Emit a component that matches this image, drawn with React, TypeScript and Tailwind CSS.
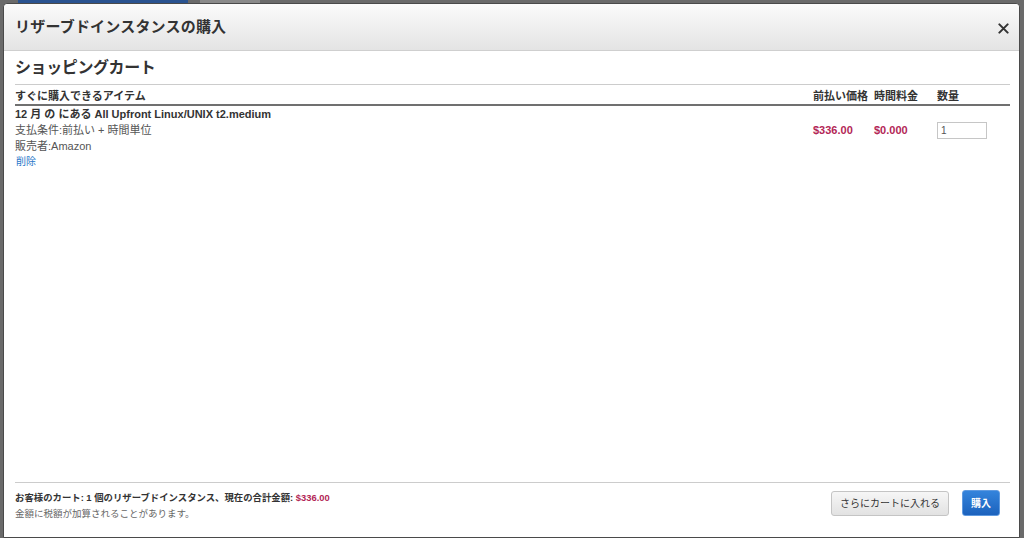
import React from "react";

const font = { fontFamily: '"Liberation Sans", "Noto Sans CJK JP", sans-serif' };

export default function App() {
  return (
    <div className="w-[1024px] h-[538px] bg-[#6a6a6a] overflow-hidden flex flex-col" style={font}>
      <div className="h-[3px] flex shrink-0">
        <div className="w-[18px]" />
        <div className="w-[170px] bg-[#2a5390]" />
        <div className="w-[12px]" />
        <div className="w-[60px] bg-[#8a8a8a]" />
      </div>
      <div className="flex-1 ml-[3px] mr-[4px] bg-white border border-[#4a4a4a] rounded-t-[4px] flex flex-col min-h-0">
        <div className="h-[47px] shrink-0 flex items-center justify-between pl-[11px] pr-[10px] border-b border-[#cfcfcf] bg-gradient-to-b from-[#fbfbfb] to-[#e4e4e4] rounded-t-[4px]">
          <div className="text-[15px] font-bold text-[#333] tracking-[0.2px]">リザーブドインスタンスの購入</div>
          <svg width="11" height="11" viewBox="0 0 12 12" className="mt-[3px]">
            <path d="M1.5 1.5 L10.5 10.5 M10.5 1.5 L1.5 10.5" stroke="#333" strokeWidth="2.2" strokeLinecap="round" />
          </svg>
        </div>
        <div className="flex-1 flex flex-col pl-[11px] pr-[9px] min-h-0">
          <div className="h-[34px] shrink-0 flex items-center border-b border-[#cccccc]">
            <div className="text-[16px] font-bold text-[#333] tracking-[-0.4px]">ショッピングカート</div>
          </div>
          <div className="h-[21px] pt-[4px] shrink-0 flex items-center border-b-2 border-[#707070] text-[11px] font-bold text-[#333]">
            <div className="flex-1">すぐに購入できるアイテム</div>
            <div className="w-[61px]">前払い価格</div>
            <div className="w-[63px]">時間料金</div>
            <div className="w-[73px]">数量</div>
          </div>
          <div className="flex shrink-0 text-[11px] leading-[16px]">
            <div className="flex-1 flex flex-col">
              <div className="font-bold text-[#333] text-[11px]">12 月 の にある All Upfront Linux/UNIX t2.medium</div>
              <div className="text-[#555]">支払条件:前払い + 時間単位</div>
              <div className="text-[#555]">販売者:Amazon</div>
              <div className="text-[#2a77c9] text-[10px] pl-[1px]">削除</div>
            </div>
            <div className="w-[61px] pt-[16px] font-bold text-[#b32656] text-[11px]">$336.00</div>
            <div className="w-[63px] pt-[16px] font-bold text-[#b32656] text-[11px]">$0.000</div>
            <div className="w-[73px] pt-[16px]">
              <div className="w-[50px] h-[17px] border border-[#c6c6c6] text-[10px] leading-[15px] pl-[3px] text-[#555]">1</div>
            </div>
          </div>
          <div className="flex-1" />
          <div className="h-[55px] shrink-0 border-t border-[#cccccc] flex items-start">
            <div className="flex-1 flex flex-col pt-[7px]">
              <div className="text-[9.4px] leading-[15px] font-bold text-[#333]">
                お客様のカート: 1 個のリザーブドインスタンス、現在の合計金額: <span className="text-[#b32656]">$336.00</span>
              </div>
              <div className="text-[9.5px] leading-[16px] text-[#666] mt-[1px]">金額に税額が加算されることがあります。</div>
            </div>
            <div className="flex items-center gap-[13px] pt-[7px] pr-[10px]">
              <div className="h-[25px] w-[118px] flex items-center justify-center rounded-[3px] border border-[#c4c4c4] bg-gradient-to-b from-[#f6f6f6] to-[#e2e2e2] text-[10px] text-[#333]">
                さらにカートに入れる
              </div>
              <div className="h-[26px] w-[38px] flex items-center justify-center rounded-[3px] border border-[#5f9ae0] bg-gradient-to-b from-[#3484dc] to-[#1c62bd] text-[10px] font-bold text-white">
                購入
              </div>
            </div>
          </div>
        </div>
      </div>
    </div>
  );
}
